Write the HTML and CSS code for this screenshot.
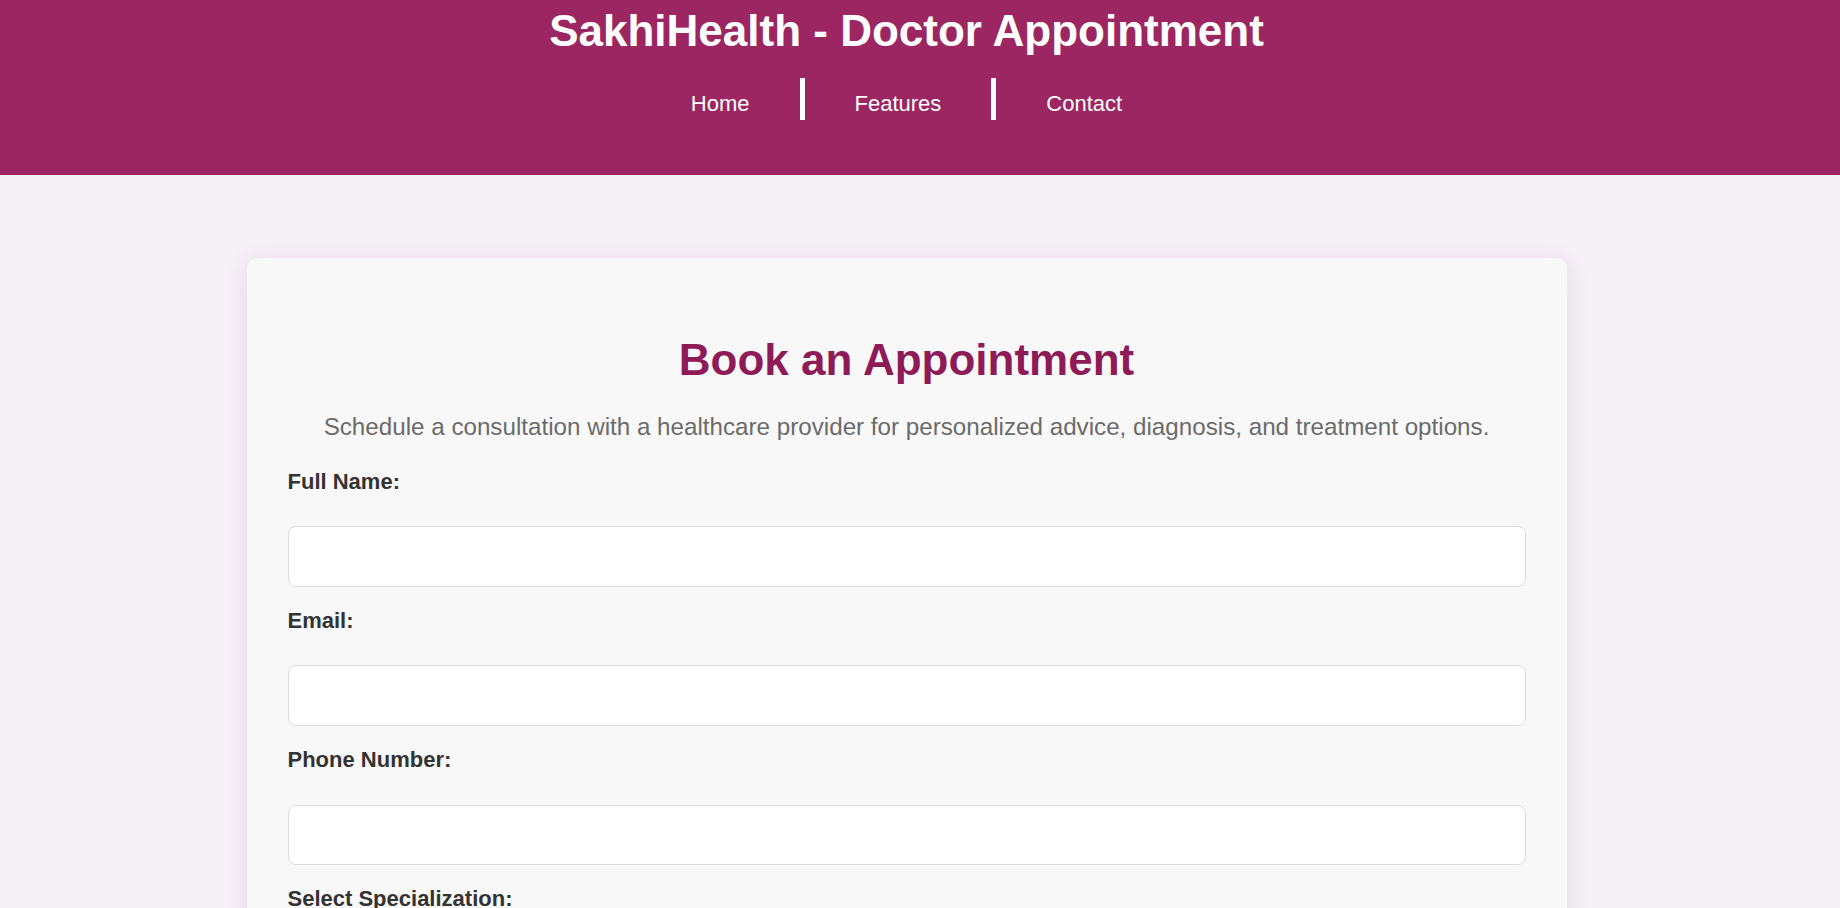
FILE: index.html
```html
<!DOCTYPE html>
<html lang="en">
<head>
<meta charset="UTF-8">
<title>SakhiHealth - Doctor Appointment</title>
<link rel="stylesheet" href="styles.css">
</head>
<body>
<header class="site-header">
  <div class="header-inner">
    <h1 class="site-title">SakhiHealth - Doctor Appointment</h1>
    <nav>
      <ul class="nav-list">
        <li class="nav-item"><a href="#" class="nav-link">Home</a></li>
        <li class="nav-item"><a href="#" class="nav-link">Features</a></li>
        <li class="nav-item"><a href="#" class="nav-link">Contact</a></li>
      </ul>
    </nav>
  </div>
</header>
<main class="main">
  <section class="card">
    <h2 class="card-title">Book an Appointment</h2>
    <p class="card-sub">Schedule a consultation with a healthcare provider for personalized advice, diagnosis, and treatment options.</p>
    <form class="form">
      <label class="field-label" for="name">Full Name:</label>
      <input class="field-input" type="text" id="name">
      <label class="field-label" for="email">Email:</label>
      <input class="field-input" type="email" id="email">
      <label class="field-label" for="phone">Phone Number:</label>
      <input class="field-input" type="tel" id="phone">
      <label class="field-label" for="spec">Select Specialization:</label>
      <select class="field-input" id="spec">
        <option>General Physician</option>
        <option>Gynecologist</option>
        <option>Dermatologist</option>
      </select>
      <label class="field-label" for="date">Preferred Date:</label>
      <input class="field-input" type="date" id="date">
      <button class="submit" type="button">Book Appointment</button>
    </form>
  </section>
</main>
</body>
</html>
```

FILE: styles.css
```css
* { box-sizing: border-box; }

body {
  margin: 0;
  background: #f6f0f7;
  font-family: "Liberation Sans", Arial, sans-serif;
  color: #333;
}

.site-header {
  background: #9c2661;
  color: #fff;
}

.header-inner {
  padding: 6px 27px 55px 0;
  text-align: center;
}

.site-title {
  margin: 0 0 22px;
  font-size: 44px;
  font-weight: bold;
  line-height: normal;
}

.nav-list {
  list-style: none;
  margin: 0;
  padding: 0;
  display: flex;
  justify-content: center;
}

.nav-item {
  padding: 13px 50px 3px;
  font-size: 22px;
  line-height: normal;
}

.nav-item + .nav-item {
  border-left: 5px solid #fff;
}

.nav-link {
  color: #fff;
  text-decoration: none;
}

.main {
  padding: 83px 27px 40px 0;
}

.card {
  max-width: 1320px;
  margin: 0 auto;
  background: #f8f8f8;
  border-radius: 10px;
  padding: 40px 41px 40px;
  box-shadow: 0 4px 24px rgba(110, 40, 110, 0.12);
}

.card-title {
  margin: 36.5px 0 0;
  text-align: center;
  font-size: 44px;
  line-height: normal;
  color: #8e1b57;
}

.card-sub {
  margin: 28px 0 0;
  text-align: center;
  font-size: 24.2px;
  line-height: normal;
  color: #6b6b6b;
}

.form {
  display: flex;
  flex-direction: column;
  padding-top: 28px;
}

.field-label {
  font-size: 22px;
  font-weight: bold;
  line-height: normal;
  color: #333;
  margin-bottom: 31.5px;
}

.field-input {
  height: 60.5px;
  width: 100%;
  border: 1px solid #dddddd;
  border-radius: 8px;
  background: #fff;
  font-family: inherit;
  font-size: 20px;
  padding: 0 16px;
  margin-bottom: 21.3px;
}

.submit {
  margin-top: 10px;
  height: 60px;
  border: none;
  border-radius: 8px;
  background: #9c2661;
  color: #fff;
  font-family: inherit;
  font-size: 22px;
  font-weight: bold;
}
```
